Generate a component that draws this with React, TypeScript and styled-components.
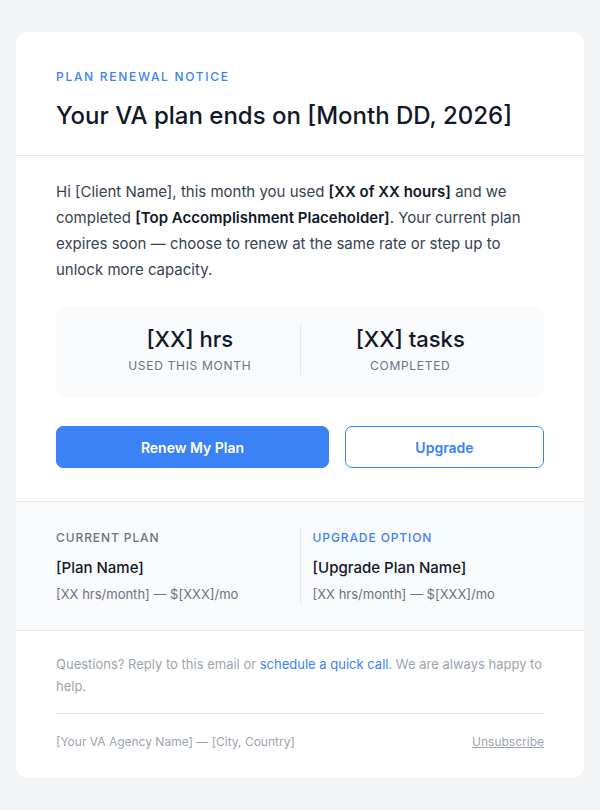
import React from "react";
import styled, { createGlobalStyle } from "styled-components";

const Global = createGlobalStyle`
  html, body { margin: 0; padding: 0; background: #f3f4f6; }
  body { font-family: Inter, "Noto Sans", Arial, sans-serif; -webkit-font-smoothing: antialiased; }
  * { box-sizing: border-box; }
`;

const Page = styled.div`
  padding: 32px 16px;
  min-height: 810px;
`;

const Card = styled.div`
  background: #ffffff;
  border-radius: 12px;
  overflow: hidden;
`;

const Header = styled.div`
  padding: 37px 40px 23px;
  border-bottom: 1px solid #e5e7eb;
`;

const Eyebrow = styled.div<{ $tone?: "blue" | "gray"; $spacing?: number }>`
  font-size: 12px;
  line-height: 16px;
  font-weight: 500;
  letter-spacing: ${(p) => p.$spacing ?? 1.7}px;
  text-transform: uppercase;
  color: ${(p) => (p.$tone === "gray" ? "#6b7280" : "#3b82f6")};
`;

const Title = styled.h1`
  margin: 15px 0 0;
  font-size: 24px;
  line-height: 32px;
  font-weight: 500;
  color: #111827;
`;

const Body = styled.div`
  padding: 23px 40px 33px;
  border-bottom: 1px solid #e5e7eb;
`;

const Paragraph = styled.p`
  margin: 0;
  font-size: 15px;
  line-height: 26px;
  color: #374151;
  strong { font-weight: 600; color: #111827; }
`;

const Stats = styled.div`
  margin-top: 23px;
  background: #f9fafb;
  border-radius: 10px;
  padding: 18px 24px 23px;
  display: grid;
  grid-template-columns: 1fr 1px 1fr;
`;

const Stat = styled.div`
  display: flex;
  flex-direction: column;
  align-items: center;
`;

const StatValue = styled.div`
  font-size: 22px;
  line-height: 30px;
  font-weight: 500;
  color: #111827;
`;

const StatLabel = styled.div`
  margin-top: 3px;
  font-size: 12px;
  line-height: 18px;
  letter-spacing: 0.7px;
  text-transform: uppercase;
  color: #6b7280;
`;

const VDivider = styled.div`
  background: #e5e7eb;
  width: 1px;
`;

const Actions = styled.div`
  margin-top: 28px;
  display: grid;
  grid-template-columns: 273fr 199fr;
  gap: 16px;
`;

const Button = styled.a<{ $variant: "primary" | "outline" }>`
  display: flex;
  align-items: center;
  justify-content: center;
  height: 42px;
  border-radius: 7px;
  font-size: 14px;
  font-weight: 600;
  text-decoration: none;
  background: ${(p) => (p.$variant === "primary" ? "#3b82f6" : "#ffffff")};
  color: ${(p) => (p.$variant === "primary" ? "#ffffff" : "#3b82f6")};
  border: 1px solid #3b82f6;
`;

const Plans = styled.div`
  background: #f9fafb;
  padding: 26px 40px 26px;
  border-bottom: 1px solid #e5e7eb;
  display: grid;
  grid-template-columns: 1fr 1px 1fr;
`;

const PlanCol = styled.div<{ $right?: boolean }>`
  padding-left: ${(p) => (p.$right ? "12px" : "0")};
  padding-top: 2px;
`;

const PlanName = styled.div`
  margin-top: 11px;
  font-size: 15px;
  line-height: 22px;
  font-weight: 500;
  color: #111827;
`;

const PlanPrice = styled.div`
  margin-top: 5px;
  font-size: 13px;
  line-height: 20px;
  color: #6b7280;
`;

const Footer = styled.div`
  padding: 22px 40px 27px;
`;

const FooterText = styled.p`
  margin: 0;
  font-size: 13px;
  line-height: 22px;
  color: #9ca3af;
  a { color: #3b82f6; text-decoration: none; }
`;

const FooterRow = styled.div`
  margin-top: 16px;
  padding-top: 19px;
  border-top: 1px solid #e5e7eb;
  display: flex;
  justify-content: space-between;
  font-size: 12px;
  line-height: 18px;
  color: #9ca3af;
  a { color: #9ca3af; text-decoration: underline; }
`;

export default function App() {
  return (
    <>
      <Global />
      <Page>
        <Card>
          <Header>
            <Eyebrow>Plan Renewal Notice</Eyebrow>
            <Title>Your VA plan ends on [Month DD, 2026]</Title>
          </Header>
          <Body>
            <Paragraph>
              Hi [Client Name], this month you used <strong>[XX of XX hours]</strong> and we
              completed <strong>[Top Accomplishment Placeholder]</strong>. Your current plan
              expires soon — choose to renew at the same rate or step up to unlock more capacity.
            </Paragraph>
            <Stats>
              <Stat>
                <StatValue>[XX] hrs</StatValue>
                <StatLabel>Used this month</StatLabel>
              </Stat>
              <VDivider />
              <Stat>
                <StatValue>[XX] tasks</StatValue>
                <StatLabel>Completed</StatLabel>
              </Stat>
            </Stats>
            <Actions>
              <Button $variant="primary" href="#">Renew My Plan</Button>
              <Button $variant="outline" href="#">Upgrade</Button>
            </Actions>
          </Body>
          <Plans>
            <PlanCol>
              <Eyebrow $tone="gray" $spacing={0.9}>Current Plan</Eyebrow>
              <PlanName>[Plan Name]</PlanName>
              <PlanPrice>[XX hrs/month] — $[XXX]/mo</PlanPrice>
            </PlanCol>
            <VDivider />
            <PlanCol $right>
              <Eyebrow $spacing={0.9}>Upgrade Option</Eyebrow>
              <PlanName>[Upgrade Plan Name]</PlanName>
              <PlanPrice>[XX hrs/month] — $[XXX]/mo</PlanPrice>
            </PlanCol>
          </Plans>
          <Footer>
            <FooterText>
              Questions? Reply to this email or <a href="#">schedule a quick call</a>. We are always happy to help.
            </FooterText>
            <FooterRow>
              <span>[Your VA Agency Name] — [City, Country]</span>
              <a href="#">Unsubscribe</a>
            </FooterRow>
          </Footer>
        </Card>
      </Page>
    </>
  );
}
